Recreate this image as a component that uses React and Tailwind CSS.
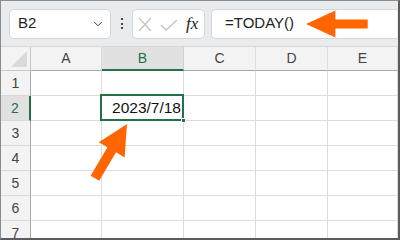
import { ChevronDown } from "lucide-react";

const cols = [
  { name: "A", w: "w-[71px]" },
  { name: "B", w: "w-[82px]" },
  { name: "C", w: "w-[72px]" },
  { name: "D", w: "w-[72px]" },
  { name: "E", w: "flex-1" },
];

const rows = [1, 2, 3, 4, 5, 6, 7];

function Arrow({ transform }) {
  return (
    <polygon
      points="0,0 30,-15 30,-5 63,-5 63,5 30,5 30,15"
      fill="#ff6600"
      transform={transform}
    />
  );
}

function Toolbar() {
  return (
    <div className="flex h-[45px] items-center bg-[#e9ecef] pl-[8px] pr-[1px]">
      <div className="flex h-[30px] w-[102px] items-center justify-between rounded-[5px] border border-[#d4d6d8] bg-white pl-[8px] pr-[5px]">
        <span className="text-[15px] text-[#222]">B2</span>
        <ChevronDown size={14} strokeWidth={1.6} color="#333" />
      </div>
      <div className="flex w-[21px] flex-col items-center gap-[2.5px]">
        <span className="h-[2px] w-[2px] bg-[#444]" />
        <span className="h-[2px] w-[2px] bg-[#444]" />
        <span className="h-[2px] w-[2px] bg-[#444]" />
      </div>
      <div className="flex h-[30px] w-[73px] items-center rounded-[5px] border border-[#d4d6d8] bg-white">
        <svg width="50" height="28" viewBox="0 0 50 28">
          <path d="M6 8 L18 21 M18 8 L6 21" stroke="#c4c4c4" strokeWidth="1.3" fill="none" />
          <path d="M28 15 L33 20 L44 10" stroke="#c4c4c4" strokeWidth="1.3" fill="none" />
        </svg>
        <span className="ml-[3px] font-['Liberation_Serif',serif] text-[17px] italic text-[#222]">fx</span>
      </div>
      <div className="ml-[6px] flex h-[30px] flex-1 items-center rounded-l-[5px] border border-r-0 border-[#d4d6d8] bg-white pl-[13px]">
        <span className="text-[15px] text-[#222]">=TODAY()</span>
      </div>
    </div>
  );
}

function Grid() {
  return (
    <div className="flex flex-col border-t border-[#d6d8da]">
      <div className="flex h-[24px] bg-[#f3f3f3]">
        <div className="relative w-[30px] border-r border-b border-[#c8c8c8]">
          <svg className="absolute right-[3px] bottom-[3px]" width="16" height="16" viewBox="0 0 16 16">
            <polygon points="16,0 16,16 0,16" fill="#dadada" />
          </svg>
        </div>
        {cols.map((c) =>
          c.name === "B" ? (
            <div
              key={c.name}
              className={`${c.w} flex items-center justify-center border-r border-b-2 border-r-[#d0d0d0] border-b-[#217346] bg-[#e1e1e1] text-[14px] text-[#217346]`}
            >
              {c.name}
            </div>
          ) : (
            <div
              key={c.name}
              className={`${c.w} flex items-center justify-center border-r border-b border-r-[#dcdcdc] border-b-[#a9a9a9] text-[14px] text-[#444]`}
            >
              {c.name}
            </div>
          )
        )}
      </div>
      {rows.map((r) => (
        <div key={r} className="flex h-[25px]">
          {r === 2 ? (
            <div className="flex w-[30px] items-center justify-center border-r-2 border-b border-r-[#217346] border-b-[#d8d8d8] bg-[#e1e1e1] text-[14px] text-[#217346]">
              {r}
            </div>
          ) : (
            <div className="flex w-[30px] items-center justify-center border-r border-b border-r-[#a9a9a9] border-b-[#d8d8d8] bg-[#f3f3f3] text-[14px] text-[#444]">
              {r}
            </div>
          )}
          {cols.map((c) =>
            r === 2 && c.name === "B" ? (
              <div key={c.name} className={`${c.w} relative border-r border-b border-[#dcdcdc]`}>
                <div className="absolute left-[-2px] top-[-2px] right-[-1px] bottom-[-1px] flex items-center justify-end border-2 border-[#217346] pr-[1px] text-[15.5px] text-[#111]">
                  2023/7/18
                  <span className="absolute right-[-4px] bottom-[-4px] h-[5px] w-[5px] border border-white bg-[#217346]" />
                </div>
              </div>
            ) : (
              <div key={c.name} className={`${c.w} border-r border-b border-[#dcdcdc]`} />
            )
          )}
        </div>
      ))}
    </div>
  );
}

export default function App() {
  return (
    <div className="relative h-[240px] w-[400px] overflow-hidden border-t border-l border-[#8c8c8c] border-r-2 border-b-2 border-r-[#5c5c5c] border-b-[#5c5c5c] bg-white font-['Liberation_Sans',sans-serif]">
      <Toolbar />
      <Grid />
      <svg className="pointer-events-none absolute left-[-1px] top-[-1px]" width="400" height="240">
        <Arrow transform="translate(306,24) scale(0.98,0.9)" />
        <Arrow transform="translate(127,124) rotate(120.6)" />
      </svg>
    </div>
  );
}
